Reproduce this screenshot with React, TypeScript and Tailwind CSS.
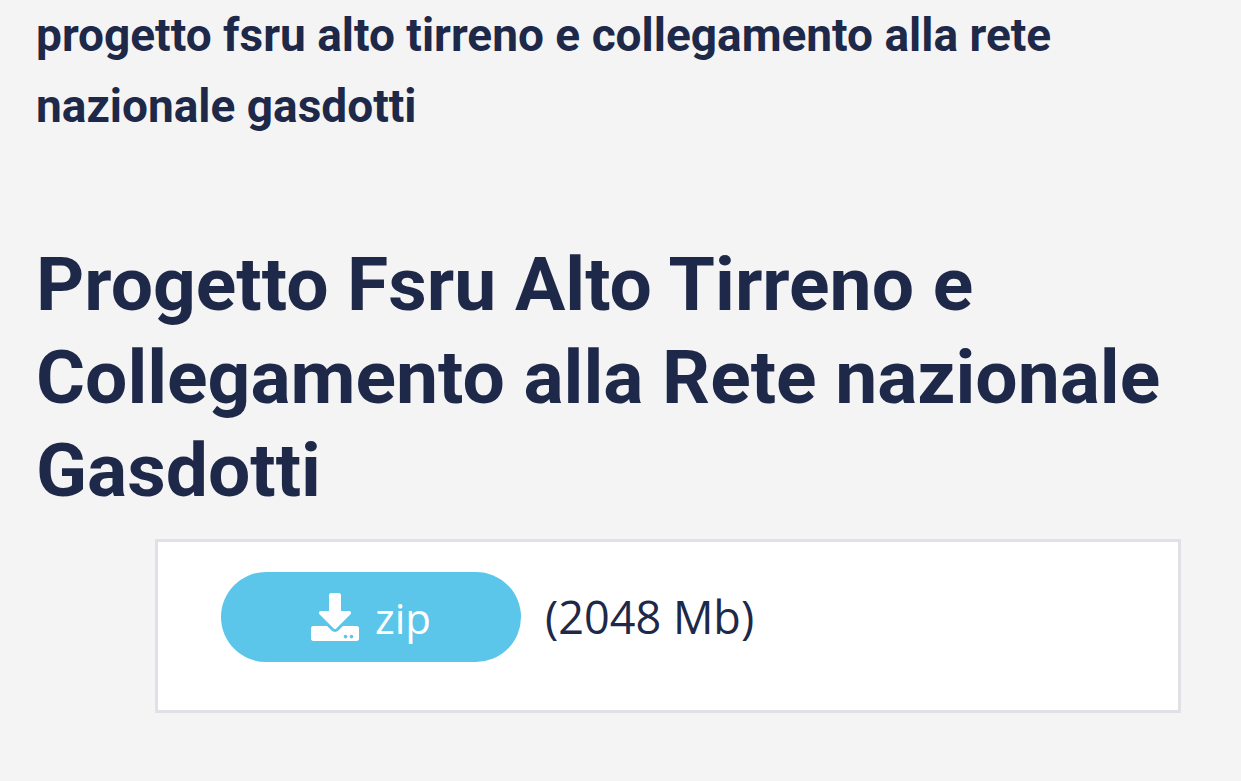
import { FaDownload } from "react-icons/fa";

const title = "Progetto Fsru Alto Tirreno e Collegamento alla Rete nazionale Gasdotti";

const App = () => {
  return (
    <div className="min-h-screen bg-[#f4f4f4] text-[#1e2848] font-['Open_Sans','Noto_Sans',sans-serif]">
      <main className="pl-9 pr-15 pb-17">
        <p className="text-[46px] leading-[71px] font-bold font-['Roboto',sans-serif] lowercase">
          {title}
        </p>
        <h1 className="mt-24 text-[75px] leading-[93px] font-bold font-['Roboto',sans-serif]">
          {title}
        </h1>
        <div className="mt-[22px] ml-[119px] flex items-center gap-6 border-3 border-[#e0e1e6] bg-white px-[63px] pt-[30px] pb-12">
          <a
            href="#zip"
            className="flex h-[90px] w-[300px] items-center justify-center gap-4 rounded-full bg-[#5cc6ea] text-[42px] text-white"
          >
            <FaDownload className="size-12" />
            zip
          </a>
          <span className="text-[45px]">(2048 Mb)</span>
        </div>
      </main>
    </div>
  );
};
export default App;
